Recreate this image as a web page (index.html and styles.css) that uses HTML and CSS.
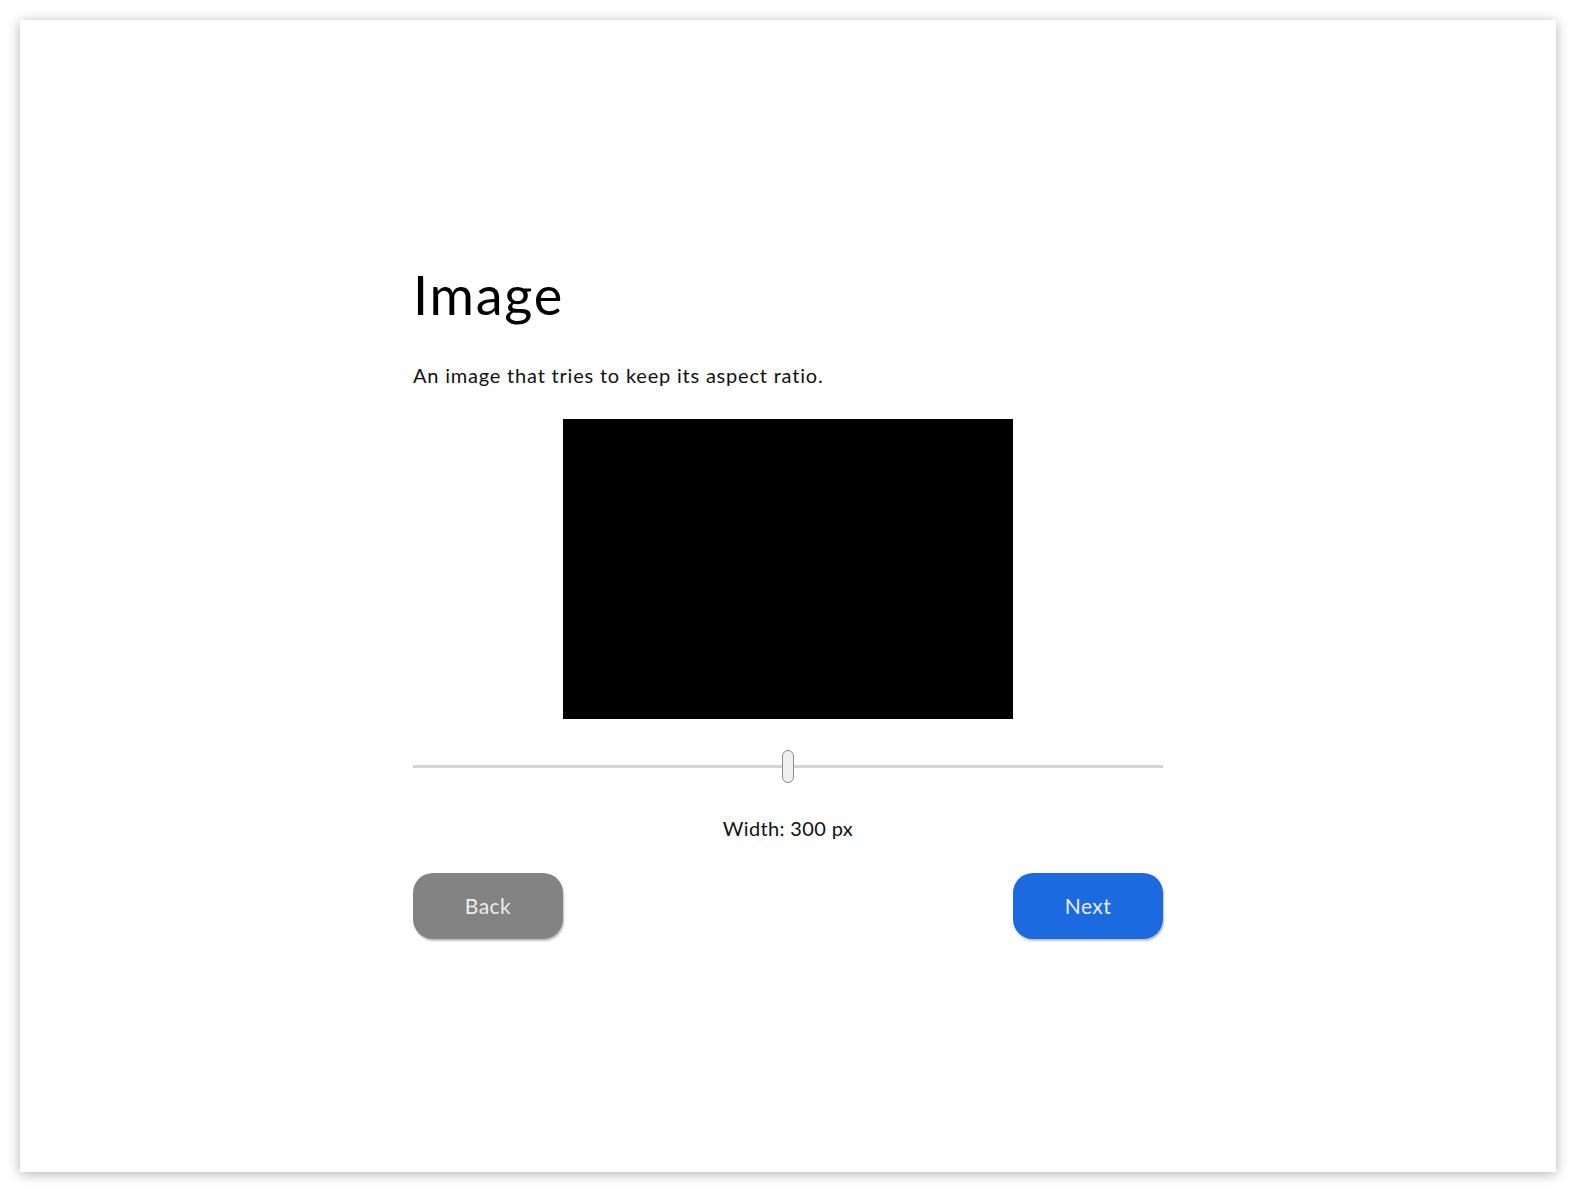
FILE: index.html
```html
<!DOCTYPE html>
<html lang="en">
<head>
    <meta charset="UTF-8">
    <title>Image</title>
    <meta name="viewport" content="width=device-width, initial-scale=1">
    <link rel="stylesheet" href="styles.css">
</head>
<body>

<div class="card">
    <div class="content">
        <h1 class="title">Image</h1>
        <p class="text">An image that tries to keep its aspect ratio.</p>

        <div class="picture-wrapper">
            <div class="picture"></div>
        </div>

        <input class="slider" type="range" min="0" max="600" value="300">

        <div class="text caption">Width: 300 px</div>

        <div class="actions">
            <button class="button back">Back</button>
            <button class="button next">Next</button>
        </div>
    </div>
</div>

</body>
</html>
```

FILE: styles.css
```css
* {
    font-family: Lato, "Noto Sans", sans-serif;
    box-sizing: border-box;
}

body {
    background-color: #fff;
    margin: 0;
    padding: 20px;
    height: 100vh;
}

.card {
    background: #fff;
    height: 100%;
    box-shadow: 0 2px 12px rgba(0, 0, 0, 0.3);
    display: flex;
    justify-content: center;
    padding-top: 240px;
}

.content {
    width: 750px;
    display: flex;
    flex-direction: column;
}

.title {
    margin: 3px 0 0;
    font-size: 54px;
    line-height: 1.2;
    font-weight: normal;
    letter-spacing: 1.8px;
    color: #000;
}

.text {
    font-size: 20px;
    line-height: 1.2;
    color: #111;
}

p.text {
    margin: 35px 0 0;
    letter-spacing: 0.8px;
}

.picture-wrapper {
    margin-top: 32px;
    display: flex;
    justify-content: center;
}

.picture {
    width: 450px;
    height: 300px;
    background: #000;
}

.slider {
    -webkit-appearance: none;
    appearance: none;
    margin: 31px 0 0;
    width: 100%;
    height: 34px;
    background: transparent;
}

.slider::-webkit-slider-runnable-track {
    height: 3px;
    background: #d4d4d4;
}

.slider::-webkit-slider-thumb {
    -webkit-appearance: none;
    width: 12px;
    height: 33px;
    margin-top: -15px;
    border: 1px solid #8c8c8c;
    border-radius: 6px;
    background: #f0f0f0;
}

.caption {
    margin-top: 32px;
    text-align: center;
    letter-spacing: 0.35px;
}

.actions {
    margin-top: 33px;
    display: flex;
    justify-content: space-between;
}

.button {
    width: 150px;
    height: 66px;
    border: none;
    border-radius: 20px;
    font-size: 21px;
    letter-spacing: 0.5px;
    box-shadow: 1px 2px 2px rgba(0, 0, 0, 0.25);
    cursor: pointer;
}

.button.back {
    background: #838383;
    color: #ececec;
}

.button.next {
    background: #1b6ae0;
    color: #e8eefb;
}
```
